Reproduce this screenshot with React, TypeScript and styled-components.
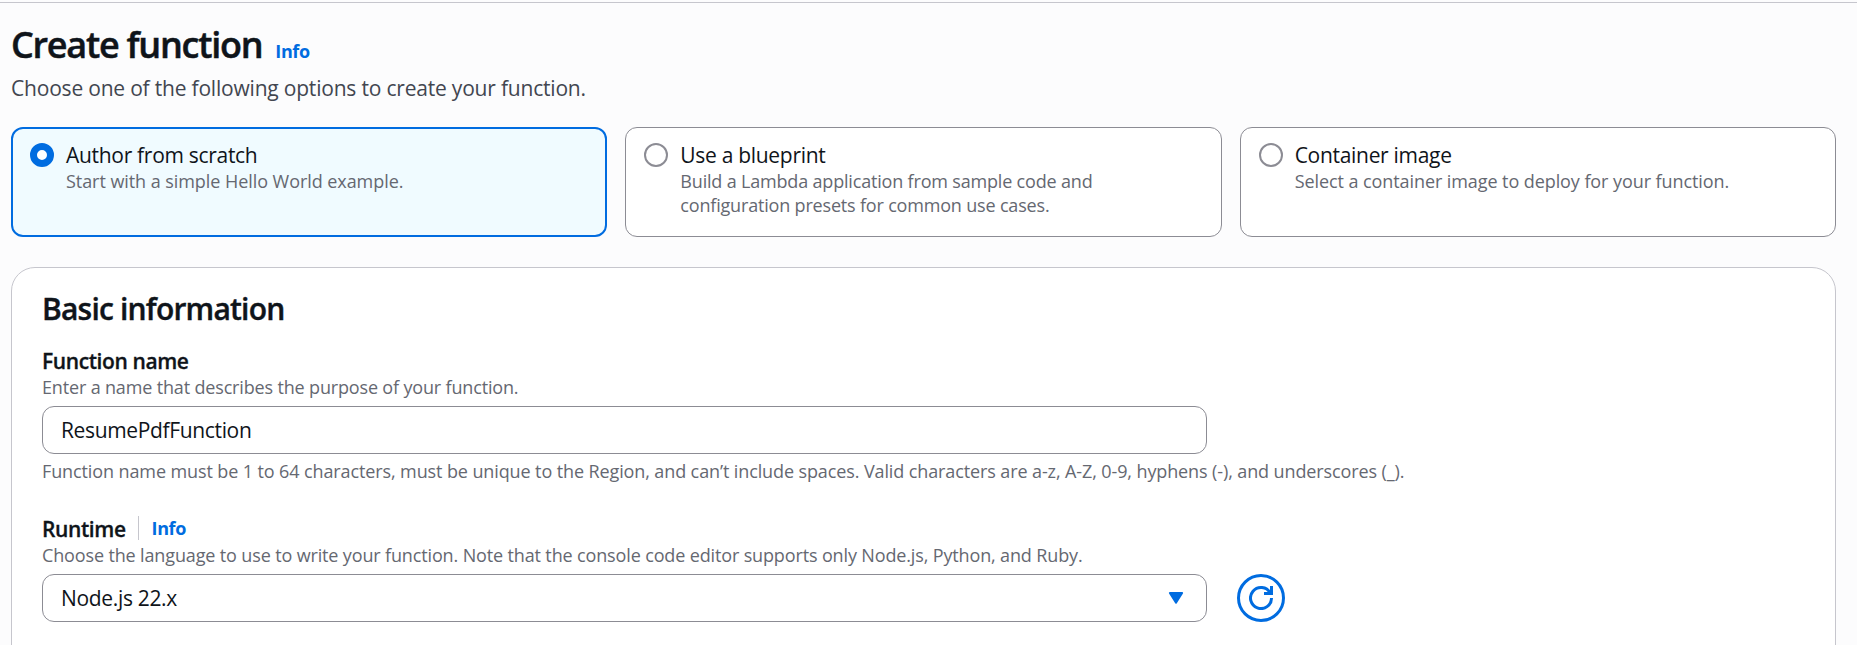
import React, { useState } from 'react';
import styled, { createGlobalStyle, css } from 'styled-components';

const GlobalStyle = createGlobalStyle`
  * { box-sizing: border-box; }
  html { overflow: hidden; }
  body {
    margin: 0;
    background: #fcfcfd;
    color: #0f141a;
    font-family: "Open Sans", "Noto Sans", sans-serif;
  }
`;

const Page = styled.div`
  height: 645px;
  overflow: hidden;
  padding-top: 2px;
`;

const TopRule = styled.div`
  height: 1px;
  background: #c6c6cd;
`;

const Content = styled.main`
  width: 1825px;
  margin-left: 11px;
  padding-top: 19px;
`;

const TitleRow = styled.div`
  display: flex;
  align-items: baseline;
  gap: 13px;
`;

const Title = styled.h1`
  margin: 0;
  font-size: 36px;
  line-height: 45px;
  font-weight: 600;
  letter-spacing: -1.25px;
  -webkit-text-stroke: 0.5px currentColor;
`;

const InfoLink = styled.a`
  color: #006ce0;
  font-size: 18px;
  line-height: 24px;
  font-weight: 700;
  letter-spacing: -0.4px;
  text-decoration: none;
`;

const Subtitle = styled.p`
  margin: 6px 0 24px;
  color: #424650;
  font-size: 21px;
  line-height: 30px;
  letter-spacing: -0.2px;
`;

const Tiles = styled.div`
  display: grid;
  grid-template-columns: repeat(3, 1fr);
  gap: 18px;
`;

const Tile = styled.label<{ $selected: boolean }>`
  display: flex;
  gap: 12px;
  height: 110px;
  border-radius: 12px;
  ${p =>
    p.$selected
      ? css`
          border: 2px solid #006ce0;
          background: #f0fbff;
          padding: 10px 17px;
        `
      : css`
          border: 1px solid #8c8c94;
          background: #ffffff;
          padding: 11px 18px;
        `}
`;

const Radio = styled.input`
  appearance: none;
  flex: none;
  width: 24px;
  height: 24px;
  margin: 4px 0 0;
  border: 2px solid #8c8c94;
  border-radius: 50%;
  background: #ffffff;
  &:checked {
    border: 7px solid #006ce0;
  }
`;

const TileText = styled.div`
  max-width: 440px;
`;

const TileLabel = styled.div`
  padding-top: 1px;
  font-size: 21px;
  line-height: 30px;
  height: 30px;
  letter-spacing: -0.3px;
`;

const Hint = styled.div<{ $track?: number }>`
  color: #656871;
  font-size: 18px;
  line-height: 24px;
  letter-spacing: ${p => p.$track ?? -0.11}px;
`;

const Panel = styled.section`
  height: 420px;
  margin-top: 30px;
  padding: 23px 30px 0;
  border: 1px solid #c6c6cd;
  border-radius: 24px;
  background: #ffffff;
`;

const PanelTitle = styled.h2`
  margin: 0 0 18px;
  font-size: 30px;
  line-height: 36px;
  font-weight: 600;
  letter-spacing: -0.8px;
  -webkit-text-stroke: 0.4px currentColor;
`;

const Field = styled.div`
  margin-bottom: 30px;
`;

const LabelRow = styled.div`
  display: flex;
  align-items: center;
  height: 30px;
`;

const FieldLabel = styled.span`
  padding-top: 1px;
  font-size: 21px;
  line-height: 30px;
  font-weight: 600;
  letter-spacing: -0.4px;
  -webkit-text-stroke: 0.3px currentColor;
`;

const Divider = styled.span`
  width: 1px;
  height: 24px;
  margin: 0 13px 0 12px;
  background: #c6c6cd;
`;

const ControlRow = styled.div`
  display: flex;
  align-items: center;
  gap: 30px;
  margin: 7px 0 5px;
`;

const controlBox = css`
  width: 1165px;
  height: 48px;
  border: 1px solid #8c8c94;
  border-radius: 12px;
  background: #ffffff;
  color: #0f141a;
  font: 400 21px/30px "Open Sans", "Noto Sans", sans-serif;
`;

const TextInput = styled.input`
  ${controlBox}
  padding: 0 18px;
  letter-spacing: -0.35px;
  outline: none;
`;

const SelectButton = styled.button`
  ${controlBox}
  display: flex;
  align-items: center;
  justify-content: space-between;
  padding: 0 18px;
  letter-spacing: -0.33px;
`;

const RefreshButton = styled.button`
  display: flex;
  align-items: center;
  justify-content: center;
  width: 48px;
  height: 48px;
  padding: 0;
  border: 3px solid #006ce0;
  border-radius: 50%;
  background: #ffffff;
`;

const CaretIcon = () => (
  <svg width="24" height="24" viewBox="0 0 16 16">
    <path d="M3.9 4.7h8.2L8 11.1z" fill="#006ce0" stroke="#006ce0" strokeWidth="1.3" strokeLinejoin="round" />
  </svg>
);

const RefreshIcon = () => (
  <svg width="24" height="24" viewBox="0 0 16 16" fill="none" stroke="#006ce0" strokeWidth="2">
    <path d="M15 8A7 7 0 1 1 14.1 4.6" />
    <path d="M10 5h5V0" />
  </svg>
);

const options = [
  { id: 'scratch', label: 'Author from scratch', track: -0.06, lines: ['Start with a simple Hello World example.'] },
  {
    id: 'blueprint',
    label: 'Use a blueprint',
    track: -0.18,
    lines: ['Build a Lambda application from sample code and', 'configuration presets for common use cases.'],
  },
  { id: 'container', label: 'Container image', track: -0.08, lines: ['Select a container image to deploy for your function.'] },
];

export default function App() {
  const [selected, setSelected] = useState('scratch');
  const [name, setName] = useState('ResumePdfFunction');

  return (
    <Page>
      <GlobalStyle />
      <TopRule />
      <Content>
        <TitleRow>
          <Title>Create function</Title>
          <InfoLink>Info</InfoLink>
        </TitleRow>
        <Subtitle>Choose one of the following options to create your function.</Subtitle>
        <Tiles>
          {options.map(o => (
            <Tile key={o.id} $selected={selected === o.id}>
              <Radio type="radio" name="source" checked={selected === o.id} onChange={() => setSelected(o.id)} />
              <TileText>
                <TileLabel>{o.label}</TileLabel>
                {o.lines.map(line => (
                  <Hint key={line} $track={o.track}>{line}</Hint>
                ))}
              </TileText>
            </Tile>
          ))}
        </Tiles>
        <Panel>
          <PanelTitle>Basic information</PanelTitle>
          <Field>
            <LabelRow>
              <FieldLabel>Function name</FieldLabel>
            </LabelRow>
            <Hint $track={-0.16}>Enter a name that describes the purpose of your function.</Hint>
            <ControlRow>
              <TextInput value={name} spellCheck={false} onChange={e => setName(e.target.value)} />
            </ControlRow>
            <Hint>
              Function name must be 1 to 64 characters, must be unique to the Region, and can’t include spaces. Valid
              characters are a-z, A-Z, 0-9, hyphens (-), and underscores (_).
            </Hint>
          </Field>
          <Field>
            <LabelRow>
              <FieldLabel>Runtime</FieldLabel>
              <Divider />
              <InfoLink>Info</InfoLink>
            </LabelRow>
            <Hint $track={-0.14}>
              Choose the language to use to write your function. Note that the console code editor supports only
              Node.js, Python, and Ruby.
            </Hint>
            <ControlRow>
              <SelectButton type="button">
                <span>Node.js 22.x</span>
                <CaretIcon />
              </SelectButton>
              <RefreshButton type="button" aria-label="Refresh">
                <RefreshIcon />
              </RefreshButton>
            </ControlRow>
          </Field>
        </Panel>
      </Content>
    </Page>
  );
}
